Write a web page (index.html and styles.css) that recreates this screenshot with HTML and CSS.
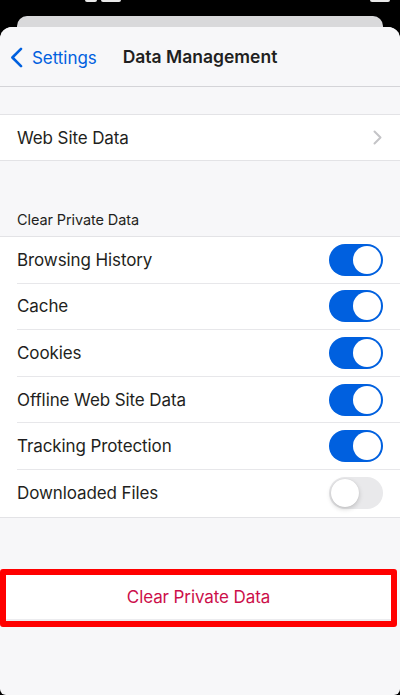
FILE: index.html
```html
<!DOCTYPE html>
<html lang="en">
<head>
<meta charset="utf-8">
<title>Data Management</title>
<link rel="stylesheet" href="styles.css">
</head>
<body>
<div class="screen">
  <div class="status">
    <span class="status-bit bit-a"></span>
    <span class="status-bit bit-b"></span>
    <span class="status-bit bit-c"></span>
  </div>
  <div class="back-sheet"></div>
  <div class="sheet">
    <header class="nav">
      <a class="back">
        <svg class="back-chevron" width="13" height="21" viewBox="0 0 13 21"><path d="M11 1.8 L2.4 10.5 L11 19.2" fill="none" stroke="#0060df" stroke-width="2.6" stroke-linecap="round" stroke-linejoin="round"/></svg>
        <span>Settings</span>
      </a>
      <h1 class="title">Data Management</h1>
    </header>

    <section class="group group-first">
      <div class="row row-link">
        <span class="label">Web Site Data</span>
        <svg class="chevron" width="9" height="15" viewBox="0 0 9 15"><path d="M1.5 1.5 L7.5 7.5 L1.5 13.5" fill="none" stroke="#c4c4c7" stroke-width="2" stroke-linecap="round" stroke-linejoin="round"/></svg>
      </div>
    </section>

    <div class="section-header">Clear Private Data</div>
    <section class="group">
      <div class="row"><span class="label">Browsing History</span><span class="toggle on"></span></div>
      <div class="row"><span class="label">Cache</span><span class="toggle on"></span></div>
      <div class="row"><span class="label">Cookies</span><span class="toggle on"></span></div>
      <div class="row"><span class="label">Offline Web Site Data</span><span class="toggle on"></span></div>
      <div class="row"><span class="label">Tracking Protection</span><span class="toggle on"></span></div>
      <div class="row"><span class="label">Downloaded Files</span><span class="toggle"></span></div>
    </section>

    <div class="clear-wrap">
      <button class="clear-btn">Clear Private Data</button>
    </div>
  </div>
</div>
</body>
</html>
```

FILE: styles.css
```css
* { box-sizing: border-box; }
html, body {
  margin: 0;
  padding: 0;
  background: #000;
}
body {
  font-family: "Inter", "Roboto", "Liberation Sans", sans-serif;
  color: #1f1f21;
}
.screen {
  position: relative;
  width: 400px;
  height: 695px;
  overflow: hidden;
  background: #000;
  padding-top: 16px;
}
.status {
  position: absolute;
  top: 0;
  left: 0;
  right: 0;
  height: 3px;
}
.status-bit {
  position: absolute;
  top: 0;
  height: 2px;
  background: #e8e8e8;
  border-radius: 0 0 2px 2px;
}
.bit-a { left: 85px; width: 12px; }
.bit-b { left: 101px; width: 20px; }
.bit-c { left: 370px; width: 20px; }

.back-sheet {
  height: 11px;
  margin: 0 17px;
  background: #d9d9db;
  border-radius: 10px 10px 0 0;
}
.sheet {
  height: 668px;
  background: #f7f7f9;
  border-radius: 12px 12px 6px 6px;
  overflow: hidden;
}
.nav {
  position: relative;
  height: 60px;
  display: flex;
  align-items: center;
  justify-content: center;
  border-bottom: 1px solid #d4d4d8;
  background: #f7f7f9;
}
.back {
  position: absolute;
  left: 10px;
  top: 20px;
  display: flex;
  align-items: center;
  gap: 9px;
  color: #0060df;
  font-size: 17px;
  letter-spacing: -0.05px;
}
.back-chevron { display: block; }
.title {
  margin: 0;
  font-size: 17.5px;
  font-weight: 600;
  letter-spacing: 0px;
  color: #1f1f21;
}

.group {
  background: #fff;
  border-top: 1px solid #e3e3e6;
  border-bottom: 1px solid #e3e3e6;
}
.group-first {
  margin-top: 27px;
}
.row {
  height: 46.6px;
  margin-left: 17px;
  padding-right: 17px;
  display: flex;
  align-items: center;
  justify-content: space-between;
  border-bottom: 1px solid #e7e7ea;
}
.row:last-child { border-bottom: none; }
.row-link { height: 45px; }
.label {
  font-size: 17px;
  letter-spacing: -0.1px;
  color: #1f1f21;
}
.chevron { display: block; margin-right: 1px; }

.section-header {
  margin-top: 50px;
  padding: 0 17px 8px;
  font-size: 14.5px;
  color: #1f1f21;
  letter-spacing: -0.1px;
}

.toggle {
  position: relative;
  width: 54px;
  height: 32px;
  border-radius: 16px;
  background: #e9e9eb;
  flex: none;
}
.toggle::after {
  content: "";
  position: absolute;
  top: 2px;
  left: 2px;
  width: 28px;
  height: 28px;
  border-radius: 50%;
  background: #fff;
  box-shadow: 0 2px 5px rgba(0,0,0,0.18), 0 0 1px rgba(0,0,0,0.12);
}
.toggle.on { background: #0060df; }
.toggle.on::after { left: 24px; box-shadow: none; }

.clear-wrap {
  margin-top: 51px;
  padding-right: 3px;
}
.clear-btn {
  display: block;
  width: 100%;
  height: 58px;
  margin: 0;
  border: 6px solid #ff0000;
  border-radius: 3px;
  background: #fff;
  box-shadow: inset 0 -2px 0 #ececef;
  color: #cc0f4a;
  font-family: "Inter", "Roboto", "Liberation Sans", sans-serif;
  font-size: 17px;
  letter-spacing: -0.1px;
  padding: 0 0 2px;
}
```
